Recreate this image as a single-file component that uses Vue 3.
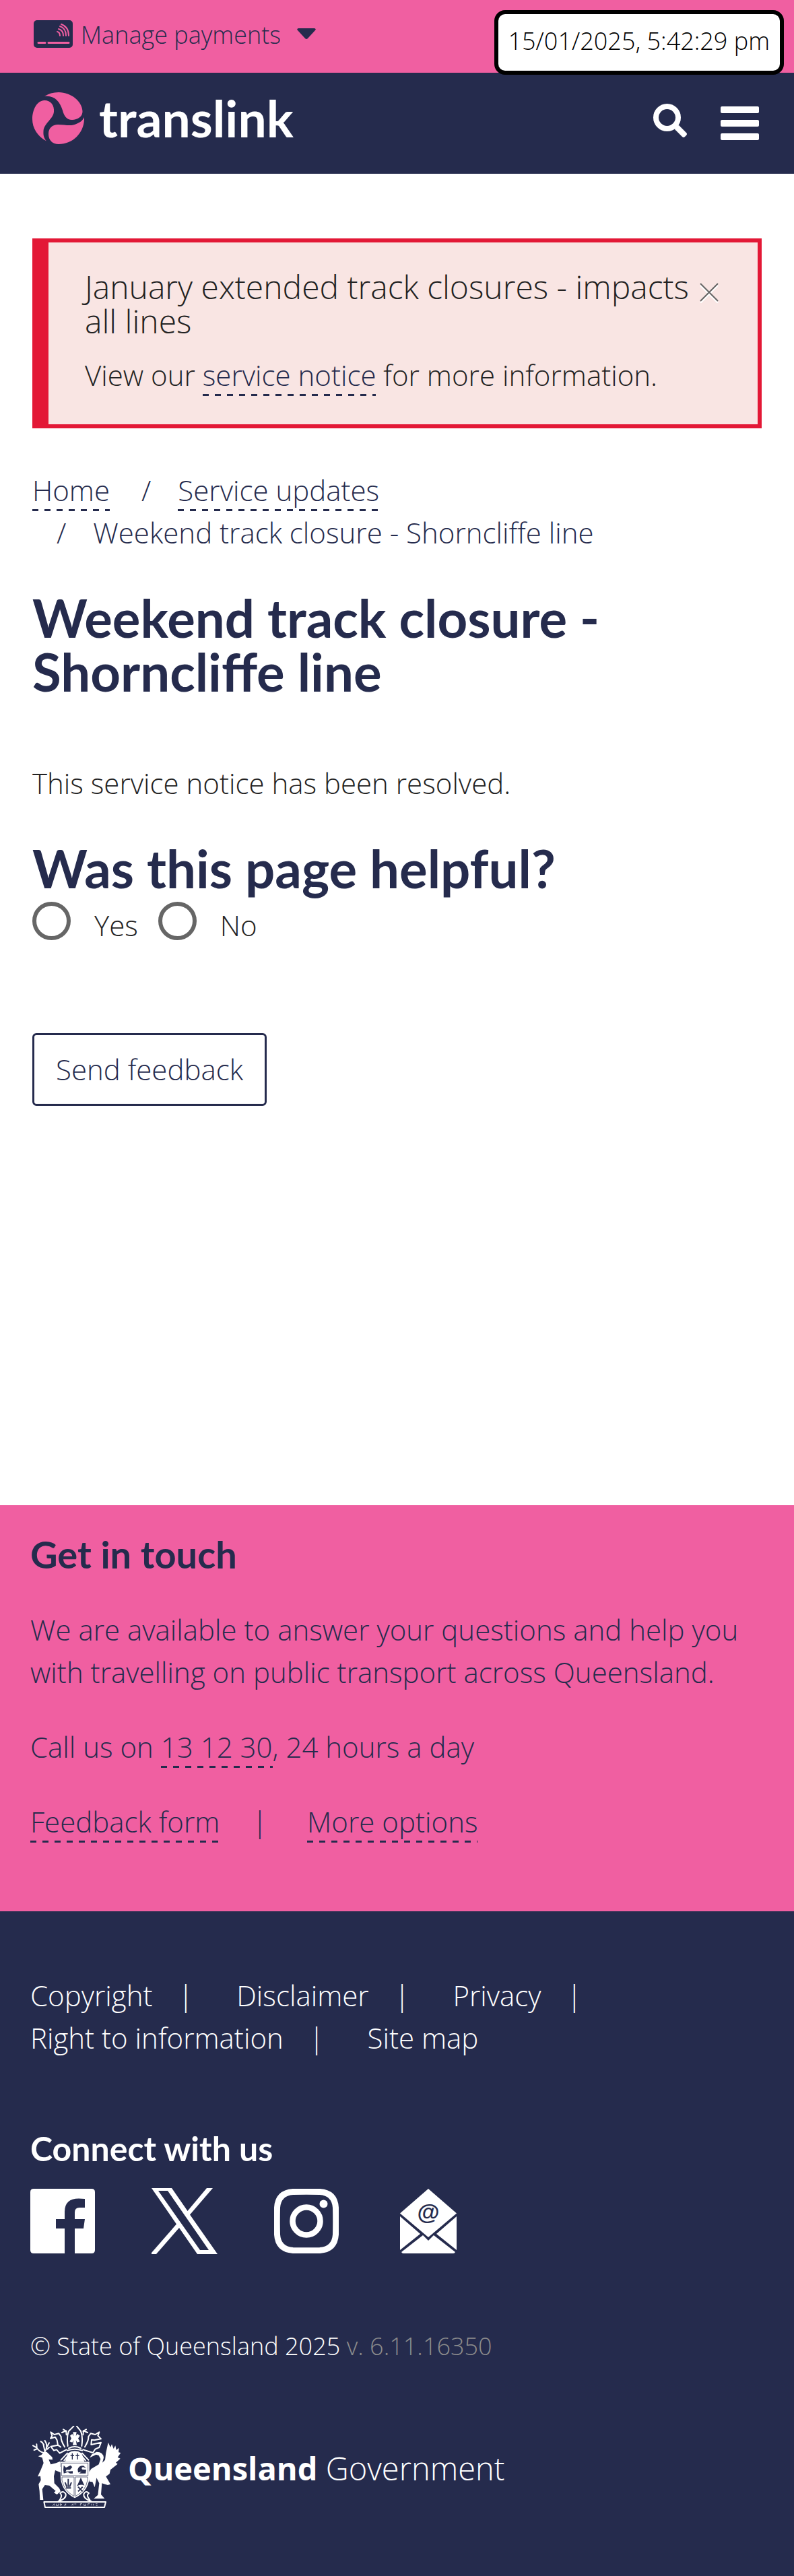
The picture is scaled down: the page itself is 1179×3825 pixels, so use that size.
<script setup>
import { ref } from 'vue'

const alertOpen = ref(true)
const helpful = ref('')
const footerLinks = ['Copyright', 'Disclaimer', 'Privacy', 'Right to information', 'Site map']
</script>

<template>
  <div class="page">
    <div class="topbar">
      <button class="payments" type="button">
        <svg class="card" viewBox="0 0 58 41" aria-hidden="true">
          <rect width="58" height="41" rx="5" fill="#252b4d" />
          <g fill="none" stroke="#f05fa1" stroke-linecap="round">
            <path d="M7 33.5H17M22 33.5H52" stroke-width="3" />
            <path d="M35 17q4 1 4 6M37 13q7 2 7 10M39 9q9 3 9 14M41 6q11 4 11 17" stroke-width="2" />
          </g>
        </svg>
        <span>Manage payments</span>
        <svg class="caret" viewBox="0 0 28 16" aria-hidden="true">
          <path d="M2 0H26Q29 1 27 3L16 15Q14 17 12 15L1 3Q-1 1 2 0Z" fill="#252b4d" />
        </svg>
      </button>
      <time class="clock">15/01/2025, 5:42:29 pm</time>
    </div>

    <header class="header">
      <a class="brand" href="#">
        <svg class="swirl" viewBox="0 0 77 77" aria-hidden="true">
          <g fill="#f05fa1">
            <path d="M18 6C24 2 31 0 39 0C58 0 74 14 74.500 28C75 36 67 41 59 41C51 41 47 35 45 27C41 14 33 4 18 6Z" />
            <path d="M21 72.500C8 66 0 53 0 40C0 26 7 12 18 12C27 12 33 19 32 29C31 40 17 46 16.500 58C16 65 18 69 21 72.500Z" />
            <path d="M77 37C78 58 62 77 39 77C30 77 24 71 24 62C24 53 30 48 38 48C47 48 54 50 61 48.500C70 46 75 42 77 37Z" />
          </g>
        </svg>
        <span>translink</span>
      </a>
      <div class="tools">
        <button type="button" aria-label="Search">
          <svg class="search" viewBox="0 0 50 50" aria-hidden="true">
            <circle cx="20.500" cy="20.500" r="16.500" fill="none" stroke="#fff" stroke-width="8" />
            <path d="M32 37L37 32Q39 32 40 34L49 43Q51 45 49 47L47 49Q45 51 43 49L34 40Q32 39 32 37Z" fill="#fff" />
          </svg>
        </button>
        <button type="button" aria-label="Menu">
          <svg class="menu" viewBox="0 0 57 50" aria-hidden="true">
            <g fill="#fff">
              <rect width="57" height="10" rx="2" />
              <rect y="20" width="57" height="10" rx="2" />
              <rect y="40" width="57" height="10" rx="2" />
            </g>
          </svg>
        </button>
      </div>
    </header>

    <main class="main">
      <section v-if="alertOpen" class="alert">
        <div class="alert-body">
          <h2>January extended track closures - impacts all lines</h2>
          <p>View our <a class="link" href="#">service notice</a> for more information.</p>
        </div>
        <button type="button" aria-label="Close" @click="alertOpen = false">
          <svg viewBox="0 0 28 30" aria-hidden="true">
            <path d="M1 4L27 30M27 4L1 30" stroke="#fff" stroke-width="2" />
            <path d="M1 1L27 27M27 1L1 27" stroke="#666" stroke-width="2" />
          </svg>
        </button>
      </section>

      <nav aria-label="Breadcrumb">
        <ol class="crumbs">
          <li><a class="link" href="#">Home</a></li>
          <li><span class="slash">/</span><a class="link" href="#">Service updates</a></li>
          <li><span class="slash">/</span>Weekend track closure - Shorncliffe line</li>
        </ol>
      </nav>

      <h1>Weekend track closure - Shorncliffe line</h1>
      <p class="notice">This service notice has been resolved.</p>

      <form @submit.prevent>
        <h2 id="helpful">Was this page helpful?</h2>
        <div class="choices" role="radiogroup" aria-labelledby="helpful">
          <label><input v-model="helpful" type="radio" name="helpful" value="yes" /><span>Yes</span></label>
          <label><input v-model="helpful" type="radio" name="helpful" value="no" /><span>No</span></label>
        </div>
        <button class="send" type="submit">Send feedback</button>
      </form>
    </main>

    <section class="touch">
      <h2>Get in touch</h2>
      <p>We are available to answer your questions and help you with travelling on public transport across Queensland.</p>
      <p>Call us on <a class="link" href="tel:131230">13 12 30</a>, 24 hours a day</p>
      <ul>
        <li><a class="link" href="#">Feedback form</a></li>
        <li><a class="link" href="#">More options</a></li>
      </ul>
    </section>

    <footer class="footer">
      <ul class="legal">
        <li v-for="item in footerLinks" :key="item"><a href="#">{{ item }}</a></li>
      </ul>
      <h3>Connect with us</h3>
      <div class="social">
        <a href="#" aria-label="Facebook">
          <svg viewBox="0 0 96 96" width="96" height="96" aria-hidden="true">
            <path fill="#fff" d="M5 0H91Q96 0 96 5V91Q96 96 91 96H66V59H79L81 45H66V35Q66 28 73 28H81V15Q76 14.500 72 14.500Q51 14.500 51 34V45H38V59H51V96H5Q0 96 0 91V5Q0 0 5 0Z" />
          </svg>
        </a>
        <a href="#" aria-label="X">
          <svg viewBox="0 0 98 98" width="98" height="98" aria-hidden="true">
            <path fill="#fff" fill-rule="evenodd" d="M0 0H30L53.500 34L82 0H91L57 39.500L98 98H68L41 59L7 98H0V96L37 53.500ZM10 4L72 92H85L24 4Z" />
          </svg>
        </a>
        <a href="#" aria-label="Instagram">
          <svg viewBox="0 0 96 96" width="96" height="96" aria-hidden="true">
            <path fill="none" stroke="#fff" stroke-width="9" d="M28 4.500Q48 4 68 4.500Q90 6 91.500 28Q92 48 91.500 68Q90 90 68 91.500Q48 92 28 91.500Q6 90 4.500 68Q4 48 4.500 28Q6 6 28 4.500Z" />
            <circle cx="48" cy="48" r="20.500" fill="none" stroke="#fff" stroke-width="8.500" />
            <circle cx="73.500" cy="22.500" r="6" fill="#fff" />
          </svg>
        </a>
        <a href="#" aria-label="Email">
          <svg viewBox="0 0 84 96" width="84" height="96" aria-hidden="true">
            <g fill="#fff">
              <path d="M42 0L84 36.500L42 72L0 36.500Z" />
              <path d="M0 41L30 67L0 91ZM84 41L54 67L84 91Z" />
              <path d="M34 69L42 77L50 69L82 94Q81 96 79 96H5Q3 96 2 94Z" />
            </g>
            <text x="42" y="46" text-anchor="middle" class="at">@</text>
          </svg>
        </a>
      </div>
      <p class="copy">© State of Queensland 2025 <span>v. 6.11.16350</span></p>
      <a class="gov" href="#">
        <svg viewBox="54 36 393 366" width="131" height="122" aria-hidden="true">
          <g fill="none" stroke="#fff" stroke-width="6" stroke-linejoin="round" stroke-linecap="round">
            <path d="M104 156Q84 150 74 134L57 124M76 138L62 144M74 132L73 118M108 154Q122 136 116 114L110 102M118 132L129 112M121 140L129 132M105 120L98 110L92 106M110 150L103 118" />
            <path d="M198 130Q180 100 182 84L172 70L152 75L136 64L142 80L135 92L156 86L164 100L168 122L180 130M206 76L204 58L186 66M206 60L192 52M168 122L136 128L150 146L162 142L176 158L206 142" />
            <path d="M288 130Q306 100 304 84L314 70L334 75L352 64L346 80L360 94L330 100L318 98L316 120M280 76L282 58L300 66M280 60L294 52M316 120L360 110L352 132L334 140L324 156L280 142" />
            <path d="M212 126Q206 84 216 60L238 38M274 126Q280 84 270 60L252 38M216 136Q243 122 270 136M210 146Q243 134 276 146M182 188L210 158M304 188L276 158M196 190L212 170M290 190L274 170" />
            <path d="M176 366Q190 346 178 336Q192 322 203 340Q207 360 170 372M310 366Q292 346 306 336Q292 322 283 340Q280 360 316 372" />
            <path d="M106 375H381L375 399H111Z" />
          </g>
          <g fill="#fff">
            <path d="M105 154L118 152L143 176L144 187L127 186L136 208L160 202L178 194V218L188 222V246L176 242L156 234L150 260L152 292L174 314L180 328L164 342L150 334L158 326L130 302L110 300L98 318L103 366H88L86 326L82 296L92 278L90 260L78 262L92 232L104 202L98 178L80 172L94 166Z" />
            <path d="M392 110L402 132L408 118L416 138L424 124L428 144L440 134L438 154L448 156L434 176L446 182L426 200L434 206L402 232L398 250L382 262L402 296L390 300L364 292L360 342L376 360H328L346 344L352 292L340 268L332 310L322 286L308 284L302 250L316 228L350 208L358 184L350 168L338 164L310 178L318 164L340 152Q370 152 372 178L366 200L378 188L382 156Z" />
            <path d="M212 158Q243 138 274 158L286 196H200Z" />
            <path d="M222 80L232 72L238 82L235 64H251L248 82L254 72L266 80L258 92L266 106L254 110L248 100L252 122H234L238 100L232 110L220 106L228 92Z" />
            <path d="M178 196H308V272Q300 330 243 358Q188 330 180 272Z" />
          </g>
          <g fill="none" stroke="#252b4d" stroke-width="3">
            <path d="M184 202H302V258H184ZM186 264H240V350Q196 326 186 278ZM246 264H300V278Q292 326 246 350Z" stroke-width="2" />
            <path d="M232 158V186M224 168H240M255 158V186M247 168H263" stroke-width="4" />
            <path d="M200 288L208 308M214 272V308M228 288L220 308M204 313H226M258 308L278 328M278 308L258 328" stroke-width="6" />
          </g>
          <g fill="#252b4d">
            <path d="M194 212L204 222L224 212L232 220L222 232L206 232L202 240L234 238V248H222L212 242L194 248L192 232Z" />
            <path d="M256 230Q262 212 282 214L294 224L280 220Q270 222 276 230L294 232L292 248H262L274 240L258 244Z" />
            <path d="M270 266L286 302Q268 294 252 306L254 302Z" />
          </g>
          <path d="M145 392L151 383L155 392M161 383V391H170V383M178 383V391L186 387ZM196 392L203 383V391M228 391L235 383V391M241 384H250M268 391V383H276M284 383V391H292V383M302 391V383H310M318 391V383M326 391V383M336 383H344M338 391H344" fill="none" stroke="#fff" stroke-width="2" />
        </svg>
        <span><b>Queensland</b> Government</span>
      </a>
    </footer>
  </div>
</template>

<style>
body {
  margin: 0;
  background: #fff;
}
</style>

<style scoped>
.page {
  font-family: "Open Sans", sans-serif;
  font-size: 42px;
  font-weight: 300;
  line-height: 63px;
  color: #222;
}
h1, h2, h3, p, ul, ol {
  margin: 0;
  padding: 0;
}
ul, ol {
  list-style: none;
}
button {
  border: 0;
  padding: 0;
  background: none;
  font: inherit;
  color: inherit;
  cursor: pointer;
}
a {
  color: inherit;
  text-decoration: none;
}
svg {
  display: block;
}
.link {
  color: #252b4d;
  padding-bottom: 3px;
  background: repeating-linear-gradient(90deg, #252b4d 0 9px, transparent 9px 18px) left bottom / 100% 3px no-repeat;
}
.topbar {
  position: relative;
  display: flex;
  padding: 25px 48px 29px;
  background: #f05fa1;
  color: #252b4d;
}
.payments {
  display: flex;
  align-items: center;
  font-size: 36px;
  line-height: 54px;
}
.card {
  width: 58px;
  height: 41px;
  margin: 0 12px 4px 2px;
}
.caret {
  width: 28px;
  height: 16px;
  margin: 0 0 4px 24px;
}
.clock {
  position: absolute;
  top: 15px;
  right: 15px;
  padding: 13px 15px 17px;
  border: 6px solid #000;
  border-radius: 16px;
  background: #fff;
  color: #000;
  font-size: 36px;
  line-height: 54px;
}
.header {
  display: flex;
  justify-content: space-between;
  padding: 29px 52px 44px 48px;
  background: #252b4d;
}
.brand {
  display: flex;
  gap: 22px;
  font: 700 75px/77px Lato, sans-serif;
  color: #fff;
}
.swirl {
  width: 77px;
  height: 77px;
}
.tools {
  display: flex;
  align-items: center;
  gap: 50px;
}
.search {
  width: 50px;
  height: 50px;
  margin-top: 6px;
}
.menu {
  width: 57px;
  height: 50px;
  margin-top: 14px;
}
.main {
  padding: 96px 48px 593px;
}
.alert {
  display: flex;
  align-items: flex-start;
  justify-content: space-between;
  padding: 40px 58px 42px 54px;
  border: 6px solid #e31836;
  border-left-width: 24px;
  background: #f9e5e3;
}
.alert-body {
  flex: 1;
}
.alert h2 {
  margin-bottom: 23px;
  font-size: 48px;
  font-weight: 300;
  line-height: 51px;
}
.alert button {
  margin-top: 20px;
}
.alert svg {
  width: 28px;
  height: 30px;
}
.crumbs {
  display: flex;
  flex-wrap: wrap;
  column-gap: 11px;
  margin-top: 60px;
  color: #252b4d;
}
.slash {
  margin: 0 40px 0 36px;
}
h1, form h2, .touch h2, h3 {
  font-family: Lato, sans-serif;
  font-weight: 700;
  color: #252b4d;
}
h1 {
  margin: 55px 0 94px;
  font-size: 78px;
  line-height: 80px;
}
form h2 {
  margin: 55px 0 10px;
  font-size: 78px;
  line-height: 80px;
}
.choices {
  display: flex;
  gap: 30px;
}
.choices label {
  display: flex;
  align-items: flex-start;
  gap: 35px;
}
.choices span {
  padding-top: 3px;
}
.choices input {
  appearance: none;
  box-sizing: border-box;
  width: 57px;
  height: 57px;
  margin: 0;
  border: 6px solid #666;
  border-radius: 50%;
}
.choices input:checked {
  background: radial-gradient(#252b4d 40%, transparent 44%);
}
.send {
  display: block;
  margin-top: 129px;
  padding: 19px 32px 20px;
  border: 3px solid #252b4d;
  border-radius: 6px;
  color: #252b4d;
}
.touch {
  padding: 43px 45px 102px;
  background: #f05fa1;
  color: #252b4d;
}
.touch h2 {
  margin-bottom: 50px;
  font-size: 56px;
  line-height: 60px;
}
.touch p {
  margin-bottom: 48px;
}
.touch ul {
  display: flex;
  column-gap: 59px;
}
.touch li:not(:last-child)::after {
  content: "|";
  margin-left: 48px;
}
.footer {
  padding: 93px 45px 101px;
  background: #252b4d;
  color: #fff;
}
.legal {
  display: flex;
  flex-wrap: wrap;
  column-gap: 64px;
}
.legal li:not(:last-child)::after {
  content: "|";
  margin-left: 38px;
}
.footer h3 {
  margin: 106px 0 32px;
  font-size: 50px;
  line-height: 54px;
  color: #fff;
}
.social {
  display: flex;
  align-items: center;
  gap: 85px;
}
.social a {
  display: flex;
  justify-content: center;
  width: 96px;
}
.social svg {
  flex: none;
}
.at {
  font: 700 34px "Liberation Sans", sans-serif;
  fill: #252b4d;
}
.copy {
  margin: 110px 0 91px;
  font-size: 36px;
  line-height: 54px;
}
.copy span {
  color: #8c8c8c;
}
.gov {
  display: flex;
  align-items: center;
  gap: 11px;
  margin-left: 3px;
  font-size: 47px;
}
.gov span {
  padding-top: 4px;
}
.gov b {
  font-weight: 700;
}
</style>
